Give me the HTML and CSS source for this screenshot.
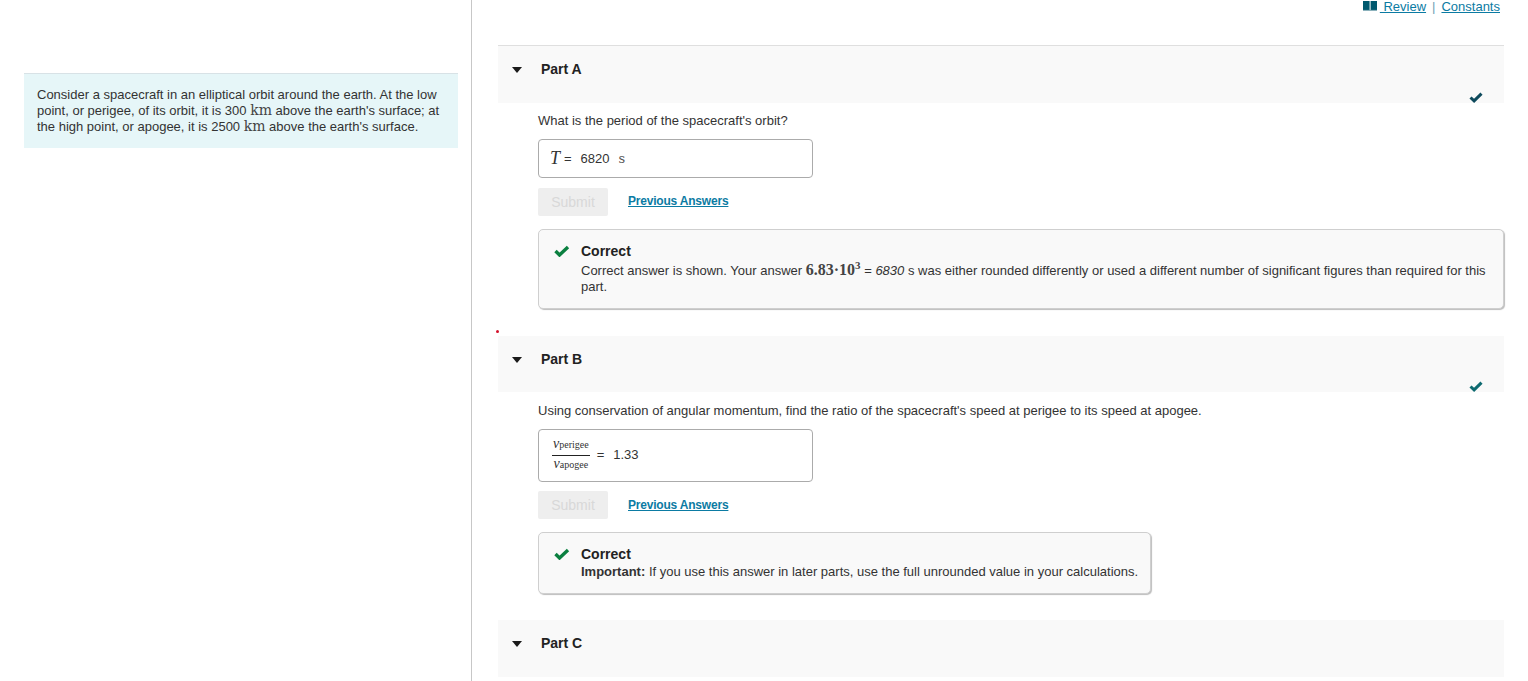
FILE: index.html
```html
<!DOCTYPE html>
<html lang="en">
<head>
<meta charset="utf-8">
<title>Part A</title>
<link rel="stylesheet" href="styles.css">
</head>
<body>
<div class="page">
  <aside class="left">
    <div class="intro">Consider a spacecraft in an elliptical orbit around the earth. At the low point, or perigee, of its orbit, it is 300 <span class="unit">km</span> above the earth's surface; at the high point, or apogee, it is 2500 <span class="unit">km</span> above the earth's surface.</div>
  </aside>
  <main class="right">
    <div class="toplinks">
      <svg class="book" width="15" height="10" viewBox="0 0 15 10"><path d="M0 0h6.6v9H0zM7.6 0H14v9H7.6z" fill="#00596e"/><path d="M0 9.4h14" stroke="#7fa9b5" stroke-width="1"/></svg>
      <a class="link" href="#">&nbsp;Review</a><span class="sep">|</span><a class="link" href="#">Constants</a>
    </div>

    <section class="part part-a">
      <header class="part-head bordered">
        <span class="caret"></span><span class="part-title">Part A</span>
        <svg class="done" width="14" height="11" viewBox="0 0 14 11"><path d="M1.5 5.5l3.6 3.4L12.5 1.6" fill="none" stroke="#0e4a5c" stroke-width="3"/></svg>
      </header>
      <div class="part-body">
        <p class="question">What is the period of the spacecraft's orbit?</p>
        <div class="answer answer-a"><span class="var">T</span><span class="eq">=</span><span class="val">6820</span><span class="unit-s">s</span></div>
        <div class="actions"><button class="submit" disabled>Submit</button><a class="prev" href="#">Previous Answers</a></div>
        <div class="feedback fb-a">
          <svg class="tick" width="16" height="12" viewBox="0 0 16 12"><path d="M1.5 6l4 4L14 2" fill="none" stroke="#0b8040" stroke-width="3.4"/></svg>
          <div class="fb-text">
            <div class="fb-title">Correct</div>
            <div class="fb-msg">Correct answer is shown. Your answer <span class="mathnum">6.83&middot;10<sup>3</sup></span> = <i>6830</i> s was either rounded differently or used a different number of significant figures than required for this part.</div>
          </div>
        </div>
      </div>
    </section>

    <span class="dot"></span>

    <section class="part part-b">
      <header class="part-head">
        <span class="caret"></span><span class="part-title">Part B</span>
        <svg class="done" width="14" height="11" viewBox="0 0 14 11"><path d="M1.5 5.5l3.6 3.4L12.5 1.6" fill="none" stroke="#0e6a70" stroke-width="3"/></svg>
      </header>
      <div class="part-body">
        <p class="question">Using conservation of angular momentum, find the ratio of the spacecraft's speed at perigee to its speed at apogee.</p>
        <div class="answer answer-b">
          <span class="frac"><span class="num"><i>v</i><span class="sub">perigee</span></span><span class="den"><i>v</i><span class="sub">apogee</span></span></span>
          <span class="eq">=</span><span class="val">1.33</span>
        </div>
        <div class="actions"><button class="submit" disabled>Submit</button><a class="prev" href="#">Previous Answers</a></div>
        <div class="feedback fb-b">
          <svg class="tick" width="16" height="12" viewBox="0 0 16 12"><path d="M1.5 6l4 4L14 2" fill="none" stroke="#0b8040" stroke-width="3.4"/></svg>
          <div class="fb-text">
            <div class="fb-title">Correct</div>
            <div class="fb-msg"><b>Important:</b> If you use this answer in later parts, use the full unrounded value in your calculations.</div>
          </div>
        </div>
      </div>
    </section>

    <section class="part part-c">
      <header class="part-head tall">
        <span class="caret"></span><span class="part-title">Part C</span>
      </header>
    </section>
  </main>
</div>
</body>
</html>
```
FILE: styles.css
```css
* { box-sizing: border-box; }
html, body { margin: 0; height: 100%; overflow: hidden; background: #fff; }
body { font-family: "Liberation Sans", Arial, sans-serif; font-size: 13px; color: #333; }
.page { display: flex; height: 681px; }

.left { width: 472px; flex: none; border-right: 1px solid #c7c7c7; padding: 73px 13px 0 24px; }
.intro { background: #e6f6f8; border-top: 1px solid #d8e2e6; padding: 13px 13px 14px; line-height: 16px; height: 75px; }
.unit { font-family: "DejaVu Serif", serif; font-size: 14px; line-height: 0; color: #444; }

.right { flex: 1; padding: 0 24px 0 26px; min-width: 0; position: relative; }
.toplinks { display: flex; justify-content: flex-end; align-items: center; height: 12px; padding-right: 4px; margin-bottom: 33px; }
.book { margin-right: 2px; }
.link { color: #0b7ba3; text-decoration: underline; }
.sep { color: #6d9fb5; margin: 0 6px; }

.part-head { position: relative; display: flex; align-items: flex-start; height: 56px; background: #f9f9f9; padding: 16px 0 0 14px; font-weight: 700; color: #222; }
.part-head.bordered { height: 58px; border-top: 1px solid #dfdfdf; padding-top: 16px; }
.part-head.tall { height: 57px; }
.caret { width: 0; height: 0; margin-top: 5px; border-left: 5.5px solid transparent; border-right: 5.5px solid transparent; border-top: 6px solid #1a1a1a; }
.part-title { margin-left: 19px; font-size: 14px; line-height: 14px; }
.done { position: absolute; right: 21px; bottom: 0; }

.part-body { padding-left: 40px; }
.question { margin: 0; line-height: 14px; }
.part-a .question { margin-top: 11px; }
.part-b .question { margin-top: 12px; }
.answer { display: flex; align-items: center; width: 275px; background: #fff; border: 1px solid #ababab; border-radius: 4px; padding-left: 11px; }
.answer-a { height: 39px; margin-top: 11px; }
.answer-b { height: 53px; margin-top: 11px; padding-left: 13px; padding-bottom: 2px; }
.var { font-family: "Liberation Serif", serif; font-style: italic; font-size: 18px; }
.eq { margin-left: 4px; }
.val { margin-left: 9px; }
.unit-s { margin-left: 9px; font-family: "DejaVu Serif", serif; font-size: 13px; color: #555; }

.frac { display: inline-flex; flex-direction: column; align-items: center; font-family: "Liberation Serif", serif; }
.num { border-bottom: 1px solid #222; padding: 0 1px 3px; font-size: 14px; line-height: 14px; }
.den { padding-top: 1px; font-size: 14px; line-height: 14px; }
.sub { font-size: 10px; }
.answer-b .eq { margin-left: 7px; }
.answer-b .val { margin-left: 9px; }

.actions { display: flex; align-items: center; gap: 20px; margin-top: 10px; }
.answer-b + .actions { margin-top: 9px; }
.submit { width: 70px; height: 28px; border: 0; border-radius: 2px; background: #eeeeee; color: #d8d8d8; font: 14px "Liberation Sans", Arial, sans-serif; padding: 0; }
.prev { color: #0b7ba3; font-size: 12px; letter-spacing: -0.2px; font-weight: 700; text-decoration: underline; position: relative; top: -1px; }
.part-b .prev { top: 0; }

.feedback { display: flex; background: #f9f9f9; border: 1px solid #cfcfcf; border-radius: 5px; box-shadow: 1px 1px 1px #bdbdbd; }
.fb-a { height: 80px; margin-top: 13px; padding: 13px 14px 0 15px; }
.fb-b { width: 613px; height: 62px; margin-top: 13px; padding: 13px 10px 0 15px; }
.tick { flex: none; margin-top: 2px; margin-right: 11px; }
.fb-title { font-size: 14px; font-weight: 700; line-height: 16px; color: #222; }
.fb-msg { line-height: 16px; margin-top: 4px; color: #333; }
.fb-b .fb-msg { margin-top: 2px; }
.mathnum { font-family: "Liberation Serif", serif; font-size: 16px; font-weight: 700; line-height: 0; color: #444; }
.mathnum sup { font-size: 11px; line-height: 0; }

.dot { position: absolute; left: 24px; top: 330px; width: 3px; height: 3px; border-radius: 50%; background: #d4112b; }
.part-b { margin-top: 27px; }
.part-c { margin-top: 26px; }
```
